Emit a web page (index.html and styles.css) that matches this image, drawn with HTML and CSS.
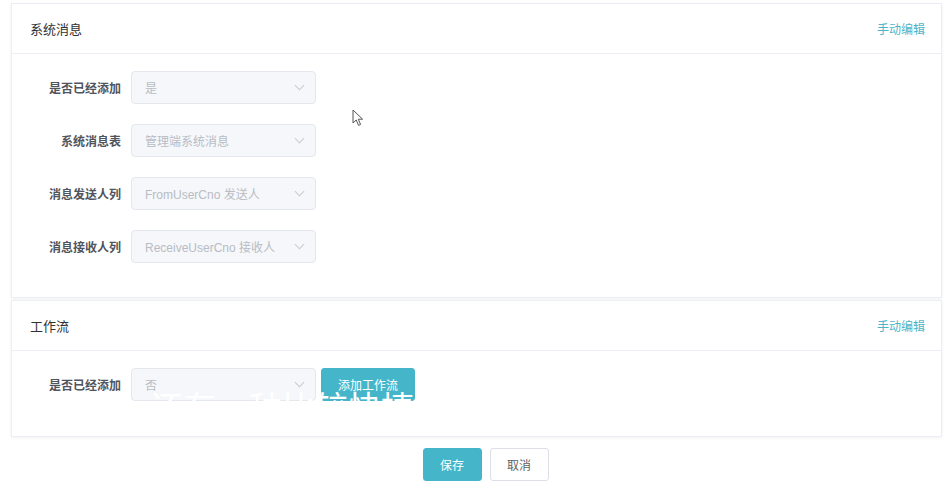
FILE: index.html
```html
<!DOCTYPE html>
<html lang="zh">
<head>
  <meta charset="UTF-8" />
  <title>系统设置</title>
  <link rel="stylesheet" href="styles.css">
</head>
<body>
  <div class="page">
    <div class="card">
      <div class="card-header">
        <span class="card-title">系统消息</span>
        <a class="edit-link">手动编辑</a>
      </div>
      <div class="card-body body-msg">
        <div class="form-row">
          <label class="form-label">是否已经添加</label>
          <div class="select"><span>是</span><i class="arrow"></i></div>
        </div>
        <div class="form-row">
          <label class="form-label">系统消息表</label>
          <div class="select"><span>管理端系统消息</span><i class="arrow"></i></div>
        </div>
        <div class="form-row">
          <label class="form-label">消息发送人列</label>
          <div class="select"><span>FromUserCno 发送人</span><i class="arrow"></i></div>
        </div>
        <div class="form-row">
          <label class="form-label">消息接收人列</label>
          <div class="select"><span>ReceiveUserCno 接收人</span><i class="arrow"></i></div>
        </div>
      </div>
    </div>

    <div class="card">
      <div class="card-header">
        <span class="card-title">工作流</span>
        <a class="edit-link">手动编辑</a>
      </div>
      <div class="card-body body-flow">
        <div class="form-row">
          <label class="form-label">是否已经添加</label>
          <div class="select"><span>否</span><i class="arrow"></i></div>
          <button class="btn btn-primary btn-add">添加工作流</button>
        </div>
      </div>
    </div>

    <div class="actions">
      <button class="btn btn-primary btn-save">保存</button>
      <button class="btn btn-default btn-cancel">取消</button>
    </div>
  </div>

  <div class="subtitle">还有一种比较快捷</div>

  <svg class="cursor" width="13" height="18" viewBox="0 0 13 18">
    <path d="M1 1 L1 14 L4.2 11 L6.6 16.4 L8.6 15.5 L6.3 10.2 L10.6 10.2 Z" fill="#fff" stroke="#555" stroke-width="1" stroke-linejoin="round"/>
  </svg>
</body>
</html>
```

FILE: styles.css
```css
* { box-sizing: border-box; }
body {
  margin: 0;
  background: #fff;
  font-family: "Helvetica Neue", "Liberation Sans", "Noto Sans CJK SC", sans-serif;
  color: #303133;
  position: relative;
  height: 488px;
  overflow: hidden;
}
.page {
  padding: 3px 8px 0 11px;
}
.card {
  border: 1px solid #ebeef5;
  background: #fff;
  box-shadow: 0 1px 3px rgba(0, 0, 0, 0.06);
  margin-bottom: 2px;
}
.card-header {
  height: 50px;
  padding: 0 16px 0 18px;
  border-bottom: 1px solid #ebeef5;
  display: flex;
  align-items: center;
  justify-content: space-between;
}
.card-title {
  font-size: 13px;
  color: #303133;
}
.edit-link {
  font-size: 12px;
  color: #4ab5c9;
  cursor: pointer;
}
.card-body {
  padding-top: 17px;
  display: flex;
  flex-direction: column;
  gap: 20px;
}
.body-msg { padding-bottom: 34px; }
.body-flow { padding-bottom: 35px; }
.form-row {
  display: flex;
  align-items: center;
  height: 33px;
}
.form-label {
  width: 119px;
  flex-shrink: 0;
  padding-right: 10px;
  text-align: right;
  font-size: 12px;
  font-weight: bold;
  color: #50545c;
}
.select {
  width: 185px;
  height: 33px;
  background: #f5f7fa;
  border: 1px solid #e4e7ed;
  border-radius: 4px;
  display: flex;
  align-items: center;
  justify-content: space-between;
  padding: 0 12px 0 13px;
  font-size: 12px;
  color: #b8bcc4;
}
.arrow {
  width: 7px;
  height: 7px;
  border-right: 1px solid #c8ccd4;
  border-bottom: 1px solid #c8ccd4;
  transform: rotate(45deg);
  margin-top: -4px;
}
.btn {
  font-family: inherit;
  font-size: 12px;
  height: 33px;
  border-radius: 3px;
  cursor: pointer;
}
.btn-primary {
  background: #45b6ca;
  border: 1px solid #45b6ca;
  color: #fff;
}
.btn-default {
  background: #fff;
  border: 1px solid #dcdfe6;
  color: #606266;
}
.btn-add {
  width: 94px;
  margin-left: 5px;
}
.actions {
  display: flex;
  justify-content: center;
  gap: 8px;
  padding: 9px 0 0 18px;
}
.btn-save, .btn-cancel { width: 59px; }
.subtitle {
  position: absolute;
  left: 150px;
  top: 382px;
  font-size: 33px;
  color: #fff;
  font-family: "Noto Sans CJK SC", sans-serif;
  white-space: nowrap;
  pointer-events: none;
}
.cursor {
  position: absolute;
  left: 352px;
  top: 109px;
}
```
